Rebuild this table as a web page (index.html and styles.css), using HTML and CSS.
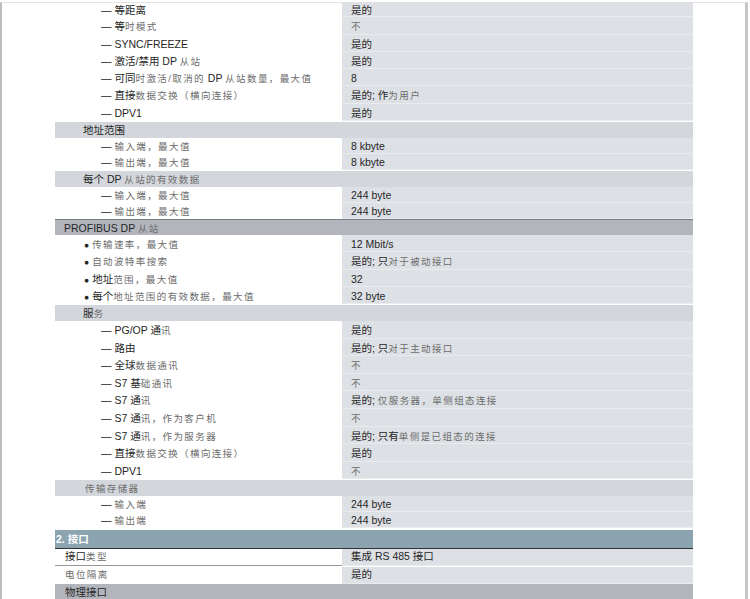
FILE: index.html
```html
<!DOCTYPE html>
<html lang="zh">
<head>
    <meta charset="UTF-8">
    <title>技术数据</title>
    <link rel="stylesheet" href="styles.css">
</head>
<body>
    <div class="page">
        <div class="sheet">
            <div class="row it first"><div class="lab dash">等距离</div><div class="val">是的</div></div>
            <div class="row it"><div class="lab dash">等<span class="l">时模式</span></div><div class="val"><span class="l">不</span></div></div>
            <div class="row it"><div class="lab dash">SYNC/FREEZE</div><div class="val">是的</div></div>
            <div class="row it"><div class="lab dash">激活/禁用 DP <span class="l">从站</span></div><div class="val">是的</div></div>
            <div class="row it"><div class="lab dash">可同<span class="l">时激活/取消的</span> DP <span class="l">从站数量，最大值</span></div><div class="val">8</div></div>
            <div class="row it"><div class="lab dash">直接<span class="l">数据交换（横向连接）</span></div><div class="val">是的; 作<span class="l">为用户</span></div></div>
            <div class="row it"><div class="lab dash">DPV1</div><div class="val">是的</div></div>

            <div class="row gh"><div class="grp">地址范围</div></div>
            <div class="row sb"><div class="lab dash"><span class="l">输入端，最大值</span></div><div class="val">8 kbyte</div></div>
            <div class="row sb"><div class="lab dash"><span class="l">输出端，最大值</span></div><div class="val">8 kbyte</div></div>

            <div class="row gh"><div class="grp">每个 DP <span class="l">从站的有效数据</span></div></div>
            <div class="row sb"><div class="lab dash"><span class="l">输入端，最大值</span></div><div class="val">244 byte</div></div>
            <div class="row sb"><div class="lab dash"><span class="l">输出端，最大值</span></div><div class="val">244 byte</div></div>

            <div class="row ph"><div class="head">PROFIBUS DP <span class="l">从站</span></div></div>
            <div class="row it"><div class="lab dot"><span class="l">传输速率，最大值</span></div><div class="val">12 Mbit/s</div></div>
            <div class="row it"><div class="lab dot"><span class="l">自动波特率搜索</span></div><div class="val">是的; 只<span class="l">对于被动接口</span></div></div>
            <div class="row it"><div class="lab dot">地址<span class="l">范围，最大值</span></div><div class="val">32</div></div>
            <div class="row it"><div class="lab dot">每个<span class="l">地址范围的有效数据，最大值</span></div><div class="val">32 byte</div></div>

            <div class="row gh"><div class="grp">服<span class="l">务</span></div></div>
            <div class="row it2"><div class="lab dash">PG/OP 通<span class="l">讯</span></div><div class="val">是的</div></div>
            <div class="row it2"><div class="lab dash">路由</div><div class="val">是的; 只<span class="l">对于主动接口</span></div></div>
            <div class="row it2"><div class="lab dash">全球<span class="l">数据通讯</span></div><div class="val"><span class="l">不</span></div></div>
            <div class="row it2"><div class="lab dash">S7 基<span class="l">础通讯</span></div><div class="val"><span class="l">不</span></div></div>
            <div class="row it2"><div class="lab dash">S7 通<span class="l">讯</span></div><div class="val">是的; <span class="l">仅服务器，单侧组态连接</span></div></div>
            <div class="row it2"><div class="lab dash">S7 通<span class="l">讯，作为客户机</span></div><div class="val"><span class="l">不</span></div></div>
            <div class="row it2"><div class="lab dash">S7 通<span class="l">讯，作为服务器</span></div><div class="val">是的; 只有<span class="l">单侧是已组态的连接</span></div></div>
            <div class="row it2"><div class="lab dash">直接<span class="l">数据交换（横向连接）</span></div><div class="val">是的</div></div>
            <div class="row it2"><div class="lab dash">DPV1</div><div class="val"><span class="l">不</span></div></div>

            <div class="row gh"><div class="grp store"><span class="l">传输存储器</span></div></div>
            <div class="row sb"><div class="lab dash"><span class="l">输入端</span></div><div class="val">244 byte</div></div>
            <div class="row sb"><div class="lab dash"><span class="l">输出端</span></div><div class="val">244 byte</div></div>

            <div class="row sec"><div class="sect">2. 接口</div></div>
            <div class="row kv"><div class="lab plain line">接口<span class="l">类型</span></div><div class="val">集成 RS 485 接口</div></div>
            <div class="row kv kv2"><div class="lab plain"><span class="l">电位隔离</span></div><div class="val">是的</div></div>
            <div class="row ph last"><div class="head wide">物理接口</div></div>
        </div>
    </div>
</body>
</html>
```

FILE: styles.css
```css
*{
    margin:0;
    padding:0;
    box-sizing:border-box;
}
body{
    background:#fff;
    font-family:"Liberation Sans","Noto Sans CJK SC",sans-serif;
    font-size:10.5px;
    color:#262626;
}
.page{
    height:599px;
    margin-top:2px;
    margin-right:2px;
    border-top:1px solid #e2e2e2;
    border-left:2px solid #bdbdbd;
    border-right:3px solid #c6c6c6;
    overflow:hidden;
}
.sheet{
    width:638px;
    margin-left:53px;
    display:flex;
    flex-direction:column;
}
.row{
    display:grid;
    grid-template-columns:287px 351px;
    height:var(--h);
}
.lab,.val,.grp,.head,.sect{
    white-space:nowrap;
    line-height:calc(var(--h) + 1px);
    overflow:hidden;
}
.val{
    background:#dde1e5;
    border-bottom:1px solid #e9ebed;
    padding-left:9px;
}
.l{
    color:#6c6c6c;
    font-size:9.5px;
    letter-spacing:1.4px;
}
.it{--h:17.3px;}
.first{--h:14.3px;}
.it2{--h:17.55px;}
.sb{--h:16px;}
.dash{padding-left:46px;}
.dash::before{
    content:"—";
    margin-right:3px;
}
.dot{padding-left:29px;}
.dot::before{
    content:"●";
    font-size:8.5px;
    margin-right:3px;
}
.gh{
    --h:16px;
    margin-top:1px;
}
.grp,.head,.sect{
    grid-column:1 / span 2;
}
.grp{
    background:#d3d6db;
    padding-left:28px;
}
.store{padding-left:30px;}
.ph{--h:16px;}
.head{
    background:#b2b5bc;
    border-top:1px solid #787c82;
    padding-left:9px;
    line-height:16px;
}
.wide{
    border-top:none;
    padding-left:10px;
    line-height:16px;
}
.last{--h:17px;}
.sec{
    --h:18.5px;
    margin-top:2px;
}
.sect{
    background:#8ba4b0;
    color:#fff;
    font-weight:bold;
    padding-left:1px;
    border-bottom:1.5px solid #2f3336;
    line-height:18px;
}
.kv{
    --h:16.5px;
    margin-top:0.5px;
}
.kv .lab,.kv .val{line-height:15.5px;}
.kv2{margin-top:1.5px;}
.plain{padding-left:10px;}
.line{border-bottom:1px solid #9a9a9a;}
```
